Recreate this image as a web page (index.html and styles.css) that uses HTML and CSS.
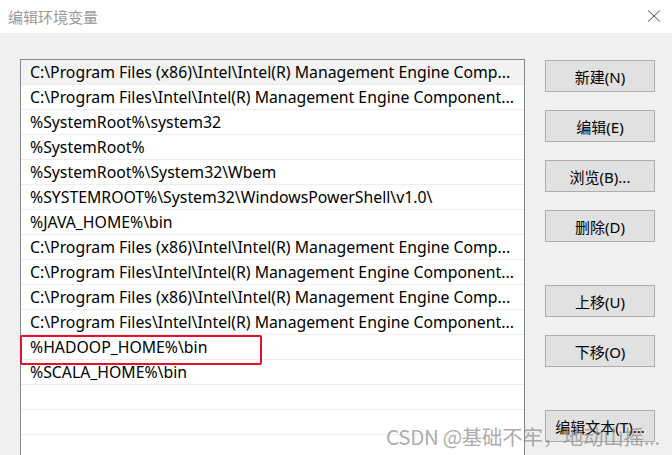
FILE: index.html
```html
<!DOCTYPE html>
<html lang="zh-CN">
<head>
  <meta charset="UTF-8" />
  <title>编辑环境变量</title>
  <link rel="stylesheet" href="styles.css">
</head>
<body>

  <div class="titlebar">
    <span class="title">编辑环境变量</span>
    <svg class="close" width="14" height="12" viewBox="0 0 14 12">
      <path d="M1 0.5 L13 11.5 M13 0.5 L1 11.5" stroke="#555" stroke-width="1" fill="none"/>
    </svg>
  </div>

  <div class="main">
    <!-- path list -->
    <div class="list">
      <div class="row hover">C:\Program Files (x86)\Intel\Intel(R) Management Engine Comp...</div>
      <div class="row">C:\Program Files\Intel\Intel(R) Management Engine Component...</div>
      <div class="row">%SystemRoot%\system32</div>
      <div class="row">%SystemRoot%</div>
      <div class="row">%SystemRoot%\System32\Wbem</div>
      <div class="row">%SYSTEMROOT%\System32\WindowsPowerShell\v1.0\</div>
      <div class="row">%JAVA_HOME%\bin</div>
      <div class="row">C:\Program Files (x86)\Intel\Intel(R) Management Engine Comp...</div>
      <div class="row">C:\Program Files\Intel\Intel(R) Management Engine Component...</div>
      <div class="row">C:\Program Files (x86)\Intel\Intel(R) Management Engine Comp...</div>
      <div class="row">C:\Program Files\Intel\Intel(R) Management Engine Component...</div>
      <div class="row marked">%HADOOP_HOME%\bin</div>
      <div class="row">%SCALA_HOME%\bin</div>
      <div class="row"></div>
      <div class="row"></div>
      <div class="row"></div>
    </div>

    <!-- buttons -->
    <div class="buttons">
      <button class="btn">新建(N)</button>
      <button class="btn">编辑(E)</button>
      <button class="btn">浏览(B)...</button>
      <button class="btn">删除(D)</button>
      <button class="btn gap">上移(U)</button>
      <button class="btn">下移(O)</button>
      <button class="btn gap">编辑文本(T)...</button>
    </div>
  </div>

  <div class="watermark">CSDN @基础不牢，地动山摇...</div>

</body>
</html>
```

FILE: styles.css
```css
* { box-sizing: border-box; margin: 0; padding: 0; }
html, body { height: 100%; overflow: hidden; }
body {
  font-family: "Noto Sans", "Noto Sans CJK SC", sans-serif;
  background: #f0f0f0;
  color: #000;
  position: relative;
}
.titlebar {
  height: 33px; background: #fff;
  display: flex; align-items: center; justify-content: space-between;
  padding: 0 11px 0 8px;
}
.title { font-family: "Noto Sans CJK SC", sans-serif; font-size: 15px; color: #9a9a9a; }
.close { display: block; margin-top: -2px; }

.main { display: flex; align-items: flex-start; padding: 26px 0 0 20px; gap: 20px; }

.list {
  width: 505px; border: 1px solid #828790; border-bottom: none;
  background: #fff;
}
.row {
  height: 25px; line-height: 24px; padding-left: 9px;
  border-bottom: 1px solid #eeeeee;
  font-size: 15.8px; white-space: nowrap;
  position: relative;
}
.row.hover { background: #f3f3f3; }
.row.marked::after {
  content: ""; position: absolute; left: -1px; top: 0;
  width: 238px; height: 26px;
  border: 2.5px solid #e5102a; border-radius: 2px;
}

.buttons { display: flex; flex-direction: column; gap: 18px; padding-top: 1px; }
.btn {
  width: 110px; height: 32px;
  background: #e1e1e1; border: 1px solid #adadad;
  font-family: "Noto Sans", "Noto Sans CJK SC", sans-serif; font-size: 15px; color: #000;
}
.btn.gap { margin-top: 25px; }

.watermark {
  position: absolute; left: 386px; top: 421px;
  font-family: "Noto Sans CJK SC", sans-serif; font-size: 20.5px;
  letter-spacing: -0.3px;
  color: rgba(135,135,135,0.7);
  white-space: nowrap;
}
```
